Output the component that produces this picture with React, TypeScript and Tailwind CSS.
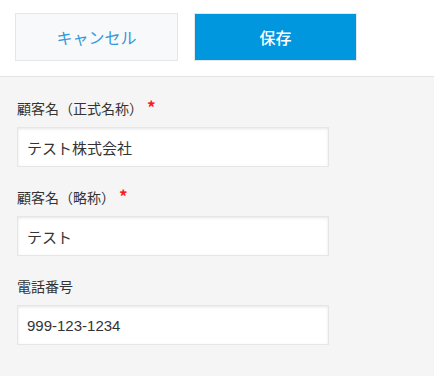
const font = "font-['Hiragino_Sans','Noto_Sans_CJK_JP',sans-serif]";

const Field = ({ label, value, required }: { label: string; value: string; required?: boolean }) => {
  return (
    <div className="flex flex-col">
      <div className="flex items-center h-5 text-[14px] text-[#333333]">
        <span>{label}</span>
        {required && <span className="ml-1 -mt-1 text-[#ff1a1a] text-[17px] font-bold leading-none">*</span>}
      </div>
      <input
        className="mt-[9px] w-[312px] h-10 px-[9px] bg-white border border-[#e3e7e8] shadow-[inset_0_1px_3px_rgba(0,0,0,0.1)] font-['Liberation_Sans','Noto_Sans_CJK_JP',sans-serif] text-[15px] text-[#333333] outline-none"
        defaultValue={value}
      />
    </div>
  );
};

const App = () => {
  return (
    <div className={`w-[434px] h-[376px] flex flex-col bg-[#f5f5f5] ${font}`}>
      {/* Toolbar */}
      <div className="h-[77px] shrink-0 bg-white border-b border-[#e3e3e3] flex items-start gap-4 pl-[15px] pt-[13px]">
        <button className="w-[163px] h-12 bg-[#f7f9fa] border border-[#e3e7e8] text-[#3498db] text-[16px]">
          キャンセル
        </button>
        <button className="w-[163px] h-12 bg-[#0097df] border border-[#e3e7e8] text-white text-[16px] font-medium">
          保存
        </button>
      </div>
      {/* Form */}
      <div className="flex flex-col gap-5 pl-[17px] pt-[21px]">
        <Field label="顧客名（正式名称）" value="テスト株式会社" required />
        <Field label="顧客名（略称）" value="テスト" required />
        <Field label="電話番号" value="999-123-1234" />
      </div>
    </div>
  );
};

export default App;
